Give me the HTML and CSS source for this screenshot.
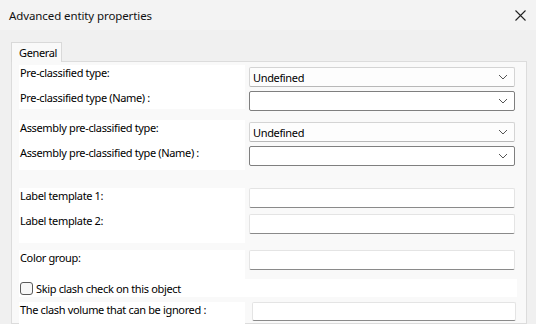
FILE: index.html
```html
<!DOCTYPE html>
<html lang="en">
<head>
  <meta charset="UTF-8">
  <title>Advanced entity properties</title>
  <link rel="stylesheet" href="styles.css">
</head>
<body>
  <div class="titlebar">
    <span class="title">Advanced entity properties</span>
    <svg class="close" width="11" height="11" viewBox="0 0 11 11">
      <path d="M0.5 0.5 L10.5 10.5 M10.5 0.5 L0.5 10.5" stroke="#222" stroke-width="1.1" fill="none"/>
    </svg>
  </div>
  <div class="content">
    <div class="tab">General</div>
    <div class="panel">
      <div class="group g1">
        <div class="labels">
          <div class="label">Pre-classified type:</div>
          <div class="label second">Pre-classified type (Name) :</div>
        </div>
        <div class="controls">
          <div class="combo light"><span>Undefined</span><svg width="10" height="6" viewBox="0 0 10 6"><path d="M1 1 L5 5 L9 1" stroke="#555" fill="none"/></svg></div>
          <div class="combo dark"><span></span><svg width="10" height="6" viewBox="0 0 10 6"><path d="M1 1 L5 5 L9 1" stroke="#555" fill="none"/></svg></div>
        </div>
      </div>
      <div class="group g2">
        <div class="labels">
          <div class="label">Assembly pre-classified type:</div>
          <div class="label second">Assembly pre-classified type (Name) :</div>
        </div>
        <div class="controls">
          <div class="combo light"><span>Undefined</span><svg width="10" height="6" viewBox="0 0 10 6"><path d="M1 1 L5 5 L9 1" stroke="#555" fill="none"/></svg></div>
          <div class="combo dark"><span></span><svg width="10" height="6" viewBox="0 0 10 6"><path d="M1 1 L5 5 L9 1" stroke="#555" fill="none"/></svg></div>
        </div>
      </div>
      <div class="group g3">
        <div class="labels">
          <div class="label">Label template 1:</div>
          <div class="label second">Label template 2:</div>
        </div>
        <div class="controls">
          <div class="textbox"></div>
          <div class="textbox"></div>
        </div>
      </div>
      <div class="group g4">
        <div class="labels">
          <div class="label">Color group:</div>
        </div>
        <div class="controls">
          <div class="textbox"></div>
        </div>
      </div>
      <div class="check-row">
        <span class="checkbox"></span>
        <span>Skip clash check on this object</span>
      </div>
      <div class="group g5">
        <div class="labels">
          <div class="label">The clash volume that can be ignored :</div>
        </div>
        <div class="controls">
          <div class="textbox"></div>
        </div>
      </div>
    </div>
  </div>
</body>
</html>
```

FILE: styles.css
```css
body {
  margin: 0;
  width: 536px;
  height: 324px;
  overflow: hidden;
  background-color: #f0f0f0;
  font-family: "Noto Sans", "Open Sans", sans-serif;
  font-size: 11px;
  letter-spacing: -0.35px;
  color: #000;
}

.titlebar {
  height: 30px;
  display: flex;
  align-items: center;
  justify-content: space-between;
  padding: 0 10px 0 9px;
  background-color: #f3f3f3;
}
.title {
  font-size: 11.5px;
  letter-spacing: -0.1px;
  color: #111;
}

.content {
  padding: 12px 9px 0 11px;
}

.tab {
  display: inline-block;
  position: relative;
  z-index: 1;
  height: 20px;
  line-height: 20px;
  padding: 0 7px 0 7px;
  border: 1px solid #d9d9d9;
  border-bottom: none;
  background-color: #f9f9f9;
  margin-bottom: -1px;
  box-sizing: border-box;
  width: 51px;
}

.panel {
  border: 1px solid #dcdcdc;
  background-color: #f9f9f9;
  padding: 3px 10px 0 7px;
  height: 258px;
}

.group {
  display: flex;
  gap: 4px;
  align-items: flex-start;
}
.labels {
  width: 226px;
  flex-shrink: 0;
  background-color: #fff;
}
.label {
  line-height: 15px;
  padding-left: 1px;
}
.label.second {
  margin-top: 10px;
}
.controls {
  width: 266px;
  display: flex;
  flex-direction: column;
  gap: 4px;
}

.g1 .labels { height: 44px; }
.g1 .controls { margin-top: 2px; }
.g2 { margin-top: 9px; }
.g2 .labels { height: 50px; }
.g2 .controls { margin-top: 2px; }
.g3 { margin-top: 18px; }
.g3 .labels { height: 55px; }
.g3 .controls { gap: 6px; }
.g4 { margin-top: 7px; }
.g4 .labels { height: 29px; }
.g5 { margin-top: 5px; }
.g5 .labels { height: 24px; }
.g5 .controls { margin-left: 3px; width: 265px; }

.combo {
  height: 20px;
  box-sizing: border-box;
  display: flex;
  align-items: center;
  justify-content: space-between;
  padding: 0 6px 0 3px;
  background-color: #fdfdfd;
  border-radius: 2px;
}
.combo.light {
  border: 1px solid #d4d4d4;
  border-bottom-color: #b8b8b8;
}
.combo.dark {
  border: 1px solid #7f7f7f;
  background-color: #fff;
}

.textbox {
  height: 20px;
  box-sizing: border-box;
  background-color: #fff;
  border: 1px solid #e4e4e4;
  border-bottom: 1px solid #8a8a8a;
  border-radius: 2px;
}
.g5 .textbox { height: 19px; }

.check-row {
  display: flex;
  align-items: center;
  gap: 3px;
  height: 18px;
  width: 498px;
  background-color: #fff;
}
.checkbox {
  width: 13px;
  height: 13px;
  box-sizing: border-box;
  border: 1px solid #5a5a5a;
  border-radius: 3px;
  background-color: #f7f7f7;
  margin-left: 1px;
}
```
